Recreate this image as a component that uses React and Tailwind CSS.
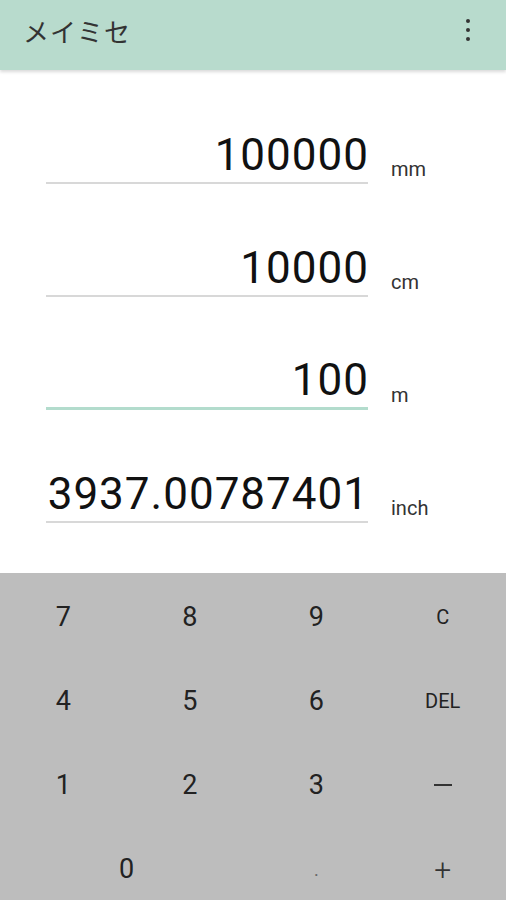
import React from "react";

const fields = [
  { v: "100000", u: "mm", active: false },
  { v: "10000", u: "cm", active: false },
  { v: "100", u: "m", active: true },
  { v: "3937.00787401", u: "inch", active: false },
];

const keys = [
  ["7", "8", "9", "C"],
  ["4", "5", "6", "DEL"],
  ["1", "2", "3"],
];

export default function App() {
  return (
    <div className="w-[506px] h-[900px] flex flex-col bg-white overflow-hidden" style={{ fontFamily: "Roboto, 'Noto Sans CJK JP', sans-serif" }}>
      <header className="h-[70px] bg-[#b8dbcd] flex items-center justify-between pl-[23px] pr-[36px] pb-[10px] shadow-[0_2px_3px_rgba(0,0,0,0.15)] relative z-10 shrink-0">
        <span className="text-[26px] text-[#333] tracking-[1px]" style={{ fontFamily: "'Noto Sans CJK JP', sans-serif" }}>メイミセ</span>
        <div className="flex flex-col gap-[5px]">
          <span className="w-[4px] h-[4px] rounded-full bg-[#333]" />
          <span className="w-[4px] h-[4px] rounded-full bg-[#333]" />
          <span className="w-[4px] h-[4px] rounded-full bg-[#333]" />
        </div>
      </header>
      <main className="h-[503px] flex flex-col pt-[57px] overflow-hidden shrink-0">
        {fields.map((f) => (
          <div key={f.u} className="h-[113px] flex items-start pl-[46px] shrink-0">
            <div className={`w-[322px] h-[57px] flex items-end justify-end ${f.active ? "border-b-[3px] border-[#b3dccd]" : "border-b-[2px] border-[#d8d8d8]"}`}>
              <span className="text-[44px] leading-[54px] text-[#111] tracking-[1px] mr-[-1px]">{f.v}</span>
            </div>
            <span className="ml-[23px] mt-[27px] text-[20px] text-[#333]">{f.u}</span>
          </div>
        ))}
      </main>
      <section className="h-[327px] bg-[#bdbdbd] grid grid-cols-4 grid-rows-[repeat(4,84px)] pt-[2px] overflow-hidden shrink-0 text-[#222]">
        {keys.flat().map((k) => (
          <div key={k} className={`flex items-center justify-center ${k === "C" || k === "DEL" ? "text-[20px]" : "text-[27px]"}`}>{k}</div>
        ))}
        <div className="flex items-center justify-center">
          <span className="w-[18px] h-[2px] bg-[#333]" />
        </div>
        <div className="col-span-2 flex items-center justify-center text-[27px]">0</div>
        <div className="flex items-center justify-center text-[18px] text-[#666]">.</div>
        <div className="flex items-center justify-center text-[30px] font-light text-[#333]">+</div>
      </section>
    </div>
  );
}
